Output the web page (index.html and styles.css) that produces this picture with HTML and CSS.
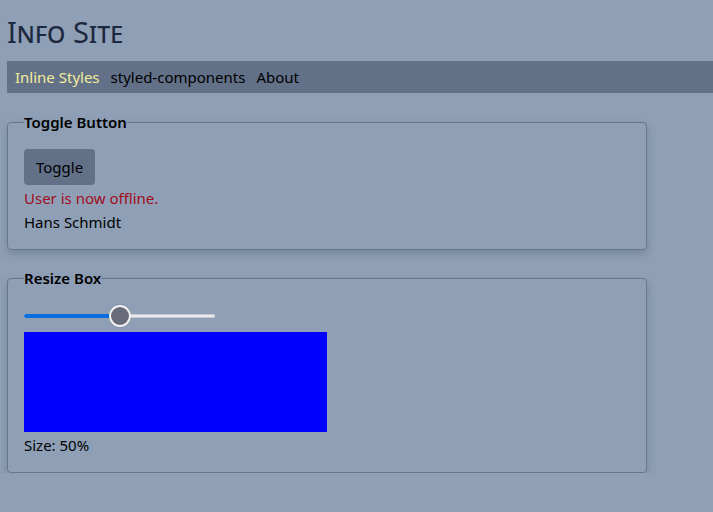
FILE: index.html
```html
<!DOCTYPE html>
<html>
<head>
<meta charset="utf-8">
<link rel="stylesheet" href="styles.css">
</head>
<body>
<h1 class="title">Info Site</h1>
<nav class="nav">
  <a class="nav-link active">Inline Styles</a>
  <a class="nav-link">styled-components</a>
  <a class="nav-link">About</a>
</nav>
<main class="main">
  <fieldset class="card">
    <legend class="card-legend">Toggle Button</legend>
    <button class="btn">Toggle</button>
    <div class="status">User is now offline.</div>
    <div class="name">Hans Schmidt</div>
  </fieldset>
  <fieldset class="card">
    <legend class="card-legend">Resize Box</legend>
    <div class="slider">
      <div class="slider-fill"></div>
      <div class="slider-thumb"></div>
    </div>
    <div class="box" style="width: 50%"></div>
    <div class="size">Size: 50%</div>
  </fieldset>
</main>
</body>
</html>
```
FILE: styles.css
```css
html, body {
  margin: 0;
  padding: 0;
}
body {
  background: #8fa0b6;
  font-family: "Noto Sans", "Open Sans", sans-serif;
  font-size: 15px;
  color: #000;
  padding-left: 7px;
}
.title {
  margin: 0;
  padding-top: 14px;
  height: 61px;
  box-sizing: border-box;
  font-size: 29px;
  font-weight: 400;
  font-variant: small-caps;
  color: #1d2940;
  line-height: 36px;
}
.nav {
  display: flex;
  gap: 11px;
  align-items: center;
  height: 32px;
  background: #627188;
  padding-left: 8px;
}
.nav-link {
  color: #000;
  text-decoration: none;
}
.nav-link.active {
  color: #f2ec9a;
}
.main {
  padding-top: 19px;
  width: 640px;
  display: flex;
  flex-direction: column;
  gap: 18px;
}
.card {
  margin: 0;
  border: 1px solid #66768b;
  border-radius: 4px;
  padding: 5px 16px 15px;
  box-shadow: 0 4px 8px rgba(70, 85, 110, 0.35);
  display: flex;
  flex-direction: column;
  align-items: flex-start;
}
.card-legend {
  padding: 0;
  font-weight: 600;
  font-size: 15px;
}
.btn {
  margin-top: 12px;
  background: #627188;
  border: none;
  border-radius: 4px;
  font-family: inherit;
  font-size: 15px;
  padding: 0 12px;
  height: 36px;
  color: #000;
}
.status {
  color: #a10d1d;
  margin-top: 1px;
  line-height: 24px;
}
.name {
  line-height: 24px;
}
.slider {
  position: relative;
  margin-top: 21px;
  width: 191px;
  height: 4px;
  background: #ececf0;
  border-radius: 2px;
  box-shadow: inset 0 0 0 1px #c8c8d0;
}
.slider-fill {
  width: 95px;
  height: 4px;
  border-radius: 2px;
  background: #0b6ee0;
}
.slider-thumb {
  position: absolute;
  left: 85px;
  top: -9px;
  width: 18px;
  height: 18px;
  border-radius: 50%;
  background: #6a6b78;
  border: 2px solid #f4f4f6;
  box-sizing: content-box;
  box-shadow: 0 0 1px rgba(0,0,0,0.4);
}
.box {
  margin-top: 14px;
  height: 100px;
  background: #0000ff;
}
.size {
  margin-top: 1px;
  line-height: 24px;
}
```
